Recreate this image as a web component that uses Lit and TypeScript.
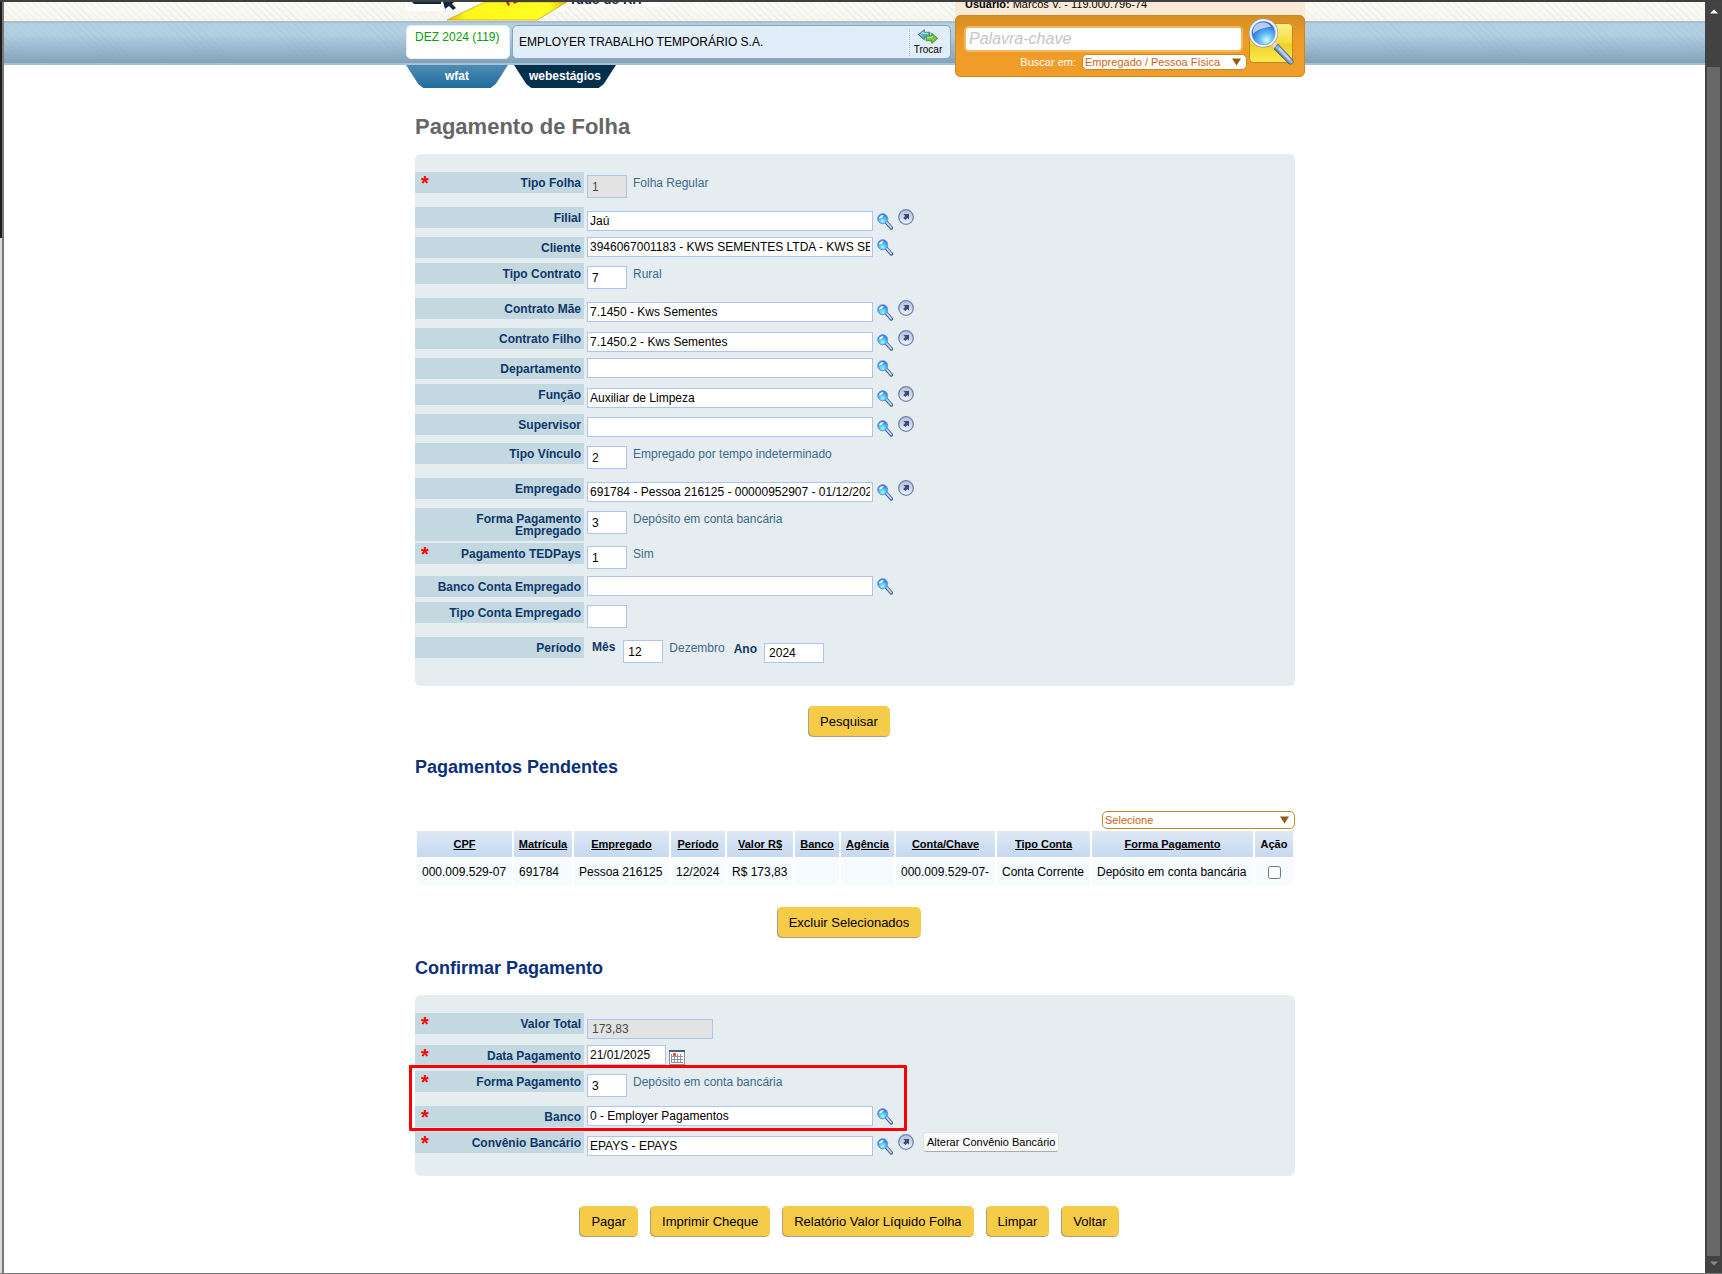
import { LitElement, html, css, svg, nothing } from "lit";
import { customElement, property } from "lit/decorators.js";
import { classMap } from "lit/directives/class-map.js";

type Kind = "code" | "lookup" | "link" | "amount" | "date" | "period";

interface Field {
  id: string;
  label: string;
  kind: Kind;
  value?: string;
  note?: string;
  required?: boolean;
  disabled?: boolean;
  tight?: boolean;
  action?: string;
}

const SEARCH_FIELDS: Field[] = [
  { id: "tipo-folha", label: "Tipo Folha", kind: "code", value: "1", note: "Folha Regular", required: true, disabled: true },
  { id: "filial", label: "Filial", kind: "link", value: "Jaú" },
  { id: "cliente", label: "Cliente", kind: "lookup", value: "3946067001183 - KWS SEMENTES LTDA - KWS SEMENTES" },
  { id: "tipo-contrato", label: "Tipo Contrato", kind: "code", value: "7", note: "Rural" },
  { id: "contrato-mae", label: "Contrato Mãe", kind: "link", value: "7.1450 - Kws Sementes" },
  { id: "contrato-filho", label: "Contrato Filho", kind: "link", value: "7.1450.2 - Kws Sementes" },
  { id: "departamento", label: "Departamento", kind: "lookup" },
  { id: "funcao", label: "Função", kind: "link", value: "Auxiliar de Limpeza" },
  { id: "supervisor", label: "Supervisor", kind: "link", tight: true },
  { id: "tipo-vinculo", label: "Tipo Vínculo", kind: "code", value: "2", note: "Empregado por tempo indeterminado" },
  { id: "empregado", label: "Empregado", kind: "link", value: "691784 - Pessoa 216125 - 00000952907 - 01/12/2024" },
  { id: "forma-empregado", label: "Forma Pagamento Empregado", kind: "code", value: "3", note: "Depósito em conta bancária" },
  { id: "tedpays", label: "Pagamento TEDPays", kind: "code", value: "1", note: "Sim", required: true, tight: true },
  { id: "banco-conta", label: "Banco Conta Empregado", kind: "lookup" },
  { id: "tipo-conta", label: "Tipo Conta Empregado", kind: "code" },
  { id: "mes", label: "Período", kind: "period" },
];

const CONFIRM_FIELDS: Field[] = [
  { id: "valor-total", label: "Valor Total", kind: "amount", value: "173,83", required: true, disabled: true },
  { id: "data", label: "Data Pagamento", kind: "date", value: "21/01/2025", required: true },
  { id: "forma", label: "Forma Pagamento", kind: "code", value: "3", note: "Depósito em conta bancária", required: true },
  { id: "banco", label: "Banco", kind: "lookup", value: "0 - Employer Pagamentos", required: true },
  { id: "convenio", label: "Convênio Bancário", kind: "link", value: "EPAYS - EPAYS", required: true, action: "Alterar Convênio Bancário" },
];

const COLUMNS: { title: string; value: string; size: string }[] = [
  { title: "CPF", value: "000.009.529-07", size: "c95" },
  { title: "Matrícula", value: "691784", size: "c58" },
  { title: "Empregado", value: "Pessoa 216125", size: "c95" },
  { title: "Período", value: "12/2024", size: "c54" },
  { title: "Valor R$", value: "R$ 173,83", size: "c66" },
  { title: "Banco", value: "", size: "c44" },
  { title: "Agência", value: "", size: "c53" },
  { title: "Conta/Chave", value: "000.009.529-07-", size: "c99" },
  { title: "Tipo Conta", value: "Conta Corrente", size: "c93" },
  { title: "Forma Pagamento", value: "Depósito em conta bancária", size: "c161" },
];

const lensIcon = html`<svg width="16" height="17" viewBox="0 0 16 17" aria-hidden="true">
  <defs>
    <radialGradient id="lens" cx="0.5" cy="0.75" r="0.75">
      <stop offset="0" stop-color="#9ffaff" /><stop offset="0.45" stop-color="#4fc0f4" /><stop offset="1" stop-color="#2b62d0" />
    </radialGradient>
  </defs>
  <path d="M9.500 9.500 14.400 15" stroke="#3d5f8f" stroke-width="3.400" stroke-linecap="round" />
  <path d="M9.600 9.400 14.200 14.600" stroke="#b9d8ee" stroke-width="1.800" stroke-linecap="round" />
  <circle cx="5.700" cy="5.700" r="5" fill="url(#lens)" stroke="#6f93cf" />
  <path d="M2 5.800C2 3 4 1.800 6.600 2 6 4 4.600 5.400 2 5.800Z" fill="#fff" opacity="0.85" />
</svg>`;

const openIcon = html`<svg width="16" height="16" viewBox="0 0 16 16" aria-hidden="true">
  <defs>
    <linearGradient id="disc" x1="0" y1="0" x2="0" y2="1">
      <stop offset="0" stop-color="#b3c0de" /><stop offset="0.5" stop-color="#c9d4ea" /><stop offset="1" stop-color="#f4f8ff" />
    </linearGradient>
  </defs>
  <circle cx="8" cy="8" r="7.300" fill="url(#disc)" stroke="#7183ac" stroke-width="1.300" />
  <path d="M5.500 5H11V10.500L9.400 9 7.400 11 5.200 9 7.200 7Z" fill="#3d4b72" />
</svg>`;

const calendarIcon = html`<svg width="16" height="15" viewBox="0 0 16 15" aria-hidden="true">
  <rect x="0.500" y="0.500" width="15" height="14" fill="#fff" stroke="#8f9199" />
  <rect x="0" y="0" width="16" height="2" fill="#4c5a82" />
  <rect x="2" y="4" width="12" height="9" fill="#8c93a8" />
  ${[0, 1, 2, 3].map((c) => [0, 1, 2].map((r) => svg`<rect x=${3 + c * 3} y=${4 + r * 3} width="2" height="2" fill="#fff" />`))}
  <rect x="4" y="3" width="3" height="3" fill="#f0562b" />
</svg>`;

const caret = html`<svg class="caret" width="9" height="8" viewBox="0 0 9 8" aria-hidden="true"><path d="M0 0.500H9L4.500 7.500Z" fill="#935a12" /></svg>`;

@customElement("field-list")
export class FieldList extends LitElement {
  @property({ attribute: false }) fields: Field[] = [];

  static styles = css`
    :host { display: block; font: 12px "Liberation Sans", Arial, sans-serif; color: #000; }
    * { box-sizing: border-box; }
    .row { display: grid; grid-template-columns: 169px 1fr; column-gap: 3px; align-items: start; min-height: 35px; }
    .row.lookup, .row.date { min-height: 26px; }
    .row.link { min-height: 30px; }
    .row.link.tight { min-height: 29px; }
    .row.code.tight { min-height: 33px; }
    .row.amount { min-height: 32px; }
    .label { display: flex; align-items: flex-start; padding: 0 3px 0 6px; background: #c4d8e1; color: #0e3768; font-weight: bold; text-align: right; line-height: 12px; }
    .star { height: 21px; width: 14px; text-align: left; color: #f00; font-size: 20px; line-height: 22px; }
    .name { flex: 1; padding: 5px 0 4px; }
    .field { display: flex; align-items: flex-start; }
    input { display: block; height: 20px; margin: 0; padding: 0 2px; border: 1px solid #aec4ec; background: #fff; color: #000; font: inherit; outline: none; }
    input:disabled { background: #e3e3e3; color: #4a4a4a; }
    .wide { width: 286px; }
    .small { width: 40px; height: 23px; margin-top: 3px; padding: 0 4px; }
    .amount .wide { width: 126px; margin-top: 6px; padding: 0 4px; }
    .date .wide { width: 79px; }
    .link .wide { margin-top: 4px; }
    .tight .wide { margin-top: 3px; }
    .note { padding: 5px 7px 4px 6px; line-height: 12px; color: #3c6a8a; }
    .icon { display: block; padding: 0; border: 0; background: none; cursor: pointer; }
    .icon svg { display: block; }
    .find { margin: 2px 5px 0 4px; }
    .link .find { margin-top: 6px; }
    .open { margin-top: 2px; }
    .cal { margin: 5px 3px 0; }
    .alter { height: 20px; margin-left: 9px; padding: 0 3px; border: 1px solid #e2e2e2; border-radius: 4px; border-bottom-color: #aaa; background: #fafafa; color: #000; font: 11px "Liberation Sans", Arial, sans-serif; }
    .sub { padding: 4px 7px 0 5px; font-weight: bold; line-height: 12px; color: #0e3768; }
    .sub + .small { margin-left: 1px; }
    .year { padding: 6px 7px 0 2px; }
    .ano { width: 60px; margin-top: 6px; padding: 0 4px; }
  `;

  private control(f: Field) {
    const value = f.value ?? "";
    switch (f.kind) {
      case "code":
        return html`<input class="small" id=${f.id} .value=${value} ?disabled=${!!f.disabled} />
          ${f.note ? html`<span class="note">${f.note}</span>` : nothing}`;
      case "amount":
        return html`<input class="wide" id=${f.id} .value=${value} ?disabled=${!!f.disabled} />`;
      case "date":
        return html`<input class="wide" id=${f.id} .value=${value} />
          <button class="icon cal" type="button" aria-label="Calendário">${calendarIcon}</button>`;
      case "period":
        return html`<label class="sub" for="mes">Mês</label><input class="small" id="mes" value="12" />
          <span class="note">Dezembro</span>
          <label class="sub year" for="ano">Ano</label><input class="ano" id="ano" value="2024" />`;
      default:
        return html`<input class="wide" id=${f.id} .value=${value} />
          <button class="icon find" type="button" aria-label="Pesquisar ${f.label}">${lensIcon}</button>
          ${f.kind === "link" ? html`<button class="icon open" type="button" aria-label="Abrir ${f.label}">${openIcon}</button>` : nothing}
          ${f.action ? html`<button class="alter" type="button">${f.action}</button>` : nothing}`;
    }
  }

  render() {
    return this.fields.map(
      (f) => html`<div class=${classMap({ row: true, [f.kind]: true, tight: !!f.tight })}>
        <label class="label" for=${f.id}><span class="star">${f.required ? "*" : nothing}</span><span class="name">${f.label}</span></label>
        <div class="field">${this.control(f)}</div>
      </div>`
    );
  }
}

@customElement("app-root")
export class AppRoot extends LitElement {
  static styles = css`
    :host { display: block; font: 12px "Liberation Sans", Arial, sans-serif; color: #000; }
    * { box-sizing: border-box; }
    .window { display: grid; grid-template-columns: 4px 1fr 17px; min-height: 100vh; border-top: 2px solid #404040; border-bottom: 2px solid #777; background: #fff; }
    .edge { display: grid; grid-template-columns: 2px 2px; background: linear-gradient(#1e1c1c 236px, #dcdcdc 236px); }
    .edge i { grid-column: 2; background: #787676; }
    .scroll { display: flex; flex-direction: column; align-items: center; background: #424242; }
    .thumb { flex: 1; width: 13px; background: #686868; }
    .up { height: 65px; padding-top: 7px; }
    .down { height: 17px; padding-top: 5px; }
    .up svg, .down svg { display: block; }

    .header {
      padding-left: 1px;
      background:
        linear-gradient(#a9bfcd, #a9bfcd) 0 19px / 100% 2px no-repeat,
        linear-gradient(#a5c1d3, #a5c1d3) 0 61px / 100% 2px no-repeat,
        repeating-linear-gradient(45deg, transparent 0 4px, rgba(130, 160, 170, 0.1) 4px 5px) 0 0 / 100% 63px no-repeat,
        linear-gradient(#fbfbf5, #f6f6ee) 0 0 / 100% 19px no-repeat,
        linear-gradient(#b3d0e3 30%, #7d9fb7) 0 19px / 100% 44px no-repeat;
    }
    .bar { display: grid; grid-template-columns: 1fr 350px; column-gap: 4px; max-width: 900px; margin: 0 auto; }
    .brand { display: block; height: 19px; }
    .cards { display: grid; grid-template-columns: 104px 1fr; column-gap: 2px; height: 44px; padding: 4px 0 6px 1px; }
    .card { display: flex; border: 1px solid #86a6be; border-radius: 5px; background: #e1edf9; }
    .month { padding: 4px 8px; border-color: #e4edf4; background: #fff; color: #0a9b0a; line-height: 14px; }
    .company { align-items: center; padding: 0 4px 0 6px; }
    .company span { flex: 1; }
    .swap { display: flex; flex-direction: column; align-items: center; width: 37px; height: 27px; padding: 0; border: 0; border-left: 1px dotted #a9bccb; background: none; color: #000; font: 10px/12px "Liberation Sans", Arial, sans-serif; }
    .tabs { display: flex; gap: 6px; padding-left: 1px; }
    .tab { display: flex; justify-content: center; width: 102px; height: 23px; padding-top: 4px; background: linear-gradient(#4f8bb2, #1f6c9d); color: #fff; font-weight: bold; font-size: 12px; line-height: 14px; text-decoration: none; clip-path: polygon(0 0, 100% 0, 88% 83%, 83% 100%, 17% 100%, 12% 83%); }
    .tab.dark { background: #04304e; }
    .user { display: flex; align-items: flex-end; height: 13px; padding: 0 10px 4px; overflow: hidden; background: #f8ead6; font-size: 11px; line-height: 13px; white-space: pre; }
    .search { display: grid; grid-template-columns: 1fr 46px; column-gap: 5px; height: 62px; padding: 10px 10px 0 8px; border: 1px solid #c98a25; border-radius: 5px; background: linear-gradient(#d48e20, #ef9d28 45%); }
    .fields { display: grid; grid-template-rows: 26px 16px; row-gap: 2px; }
    .word { width: 100%; height: 26px; padding: 0 3px; border: 2px solid #f4b860; border-radius: 5px; background: #fff; font: italic 16px "Liberation Sans", Arial, sans-serif; outline: none; }
    .word::placeholder { color: #c6c6c6; opacity: 1; }
    .scope { display: flex; justify-content: flex-end; align-items: center; gap: 6px; margin-right: -4px; color: #fff; font-size: 11px; }
    .pick { display: grid; align-items: center; }
    .pick > * { grid-area: 1 / 1; }
    .pick select { appearance: none; width: 165px; height: 16px; margin: 0; padding: 0 2px; border: 1px solid #c98a25; border-radius: 5px; background: #fff; color: #cc6412; font: 11px/12px "Liberation Sans", Arial, sans-serif; outline: none; }
    .pick.big select { width: 193px; height: 18px; padding: 0 2px; }
    .caret { justify-self: end; margin-right: 6px; pointer-events: none; }
    .go { width: 46px; height: 50px; margin-top: -9px; padding: 0; border: 0; background: none; }
    .go svg { display: block; }

    .page { max-width: 881px; margin: 0 auto; padding: 26px 0 36px 1px; }
    h1 { margin: 0 0 14px; color: #666; font-size: 22px; line-height: 26px; }
    h2 { margin: 19px 0 16px; color: #0b2f7b; font-size: 18px; line-height: 22px; }
    .panel { position: relative; padding: 18px 0 14px; border-radius: 6px; background: #e5edf0; }
    .mark { position: absolute; left: -6px; top: 70px; width: 498px; height: 66px; border: 3px solid #f00; border-radius: 1px; pointer-events: none; }
    .actions { display: flex; justify-content: center; gap: 12px; padding: 20px 12px 0 0; }
    .actions.last { padding-top: 30px; }
    .btn { height: 31px; padding: 0 12px 1px; border: 0; border-radius: 5px; background: #f5cb47; box-shadow: inset 1px -1px 0 #aaa08a; color: #000; font: 13px "Liberation Sans", Arial, sans-serif; }
    .filter { display: flex; justify-content: flex-end; padding-top: 17px; }
    table { width: 100%; border-collapse: separate; border-spacing: 2px; table-layout: fixed; }
    th { height: 26px; padding: 0; background: linear-gradient(#dfe9f5, #c5d9f2); font-size: 11px; }
    th a { color: #000; }
    td { height: 26px; padding: 0 0 0 5px; background: #f5fbff; white-space: nowrap; }
    td.check { padding: 0; text-align: center; }
    td input { display: block; width: 13px; height: 13px; margin: 1px auto 0; }
    .c95 { width: 95px; } .c58 { width: 58px; } .c54 { width: 54px; } .c66 { width: 66px; } .c44 { width: 44px; }
    .c53 { width: 53px; } .c99 { width: 99px; } .c93 { width: 93px; } .c161 { width: 161px; }
  `;

  private buttons(names: string[]) {
    return names.map((n) => html`<button class="btn" type="button">${n}</button>`);
  }

  render() {
    return html`<div class="window">
      <div class="edge"><i></i></div>
      <main>
        <header class="header">
          <div class="bar">
            <div>
              <svg class="brand" width="260" height="19" viewBox="0 0 260 19" aria-hidden="true">
                <defs>
                  <linearGradient id="ray" x1="0" y1="0" x2="1" y2="0"><stop offset="0" stop-color="#e2b20d" /><stop offset="0.15" stop-color="#fdf51c" /><stop offset="0.85" stop-color="#ffff1f" /><stop offset="1" stop-color="#d8b410" /></linearGradient>
                </defs>
                <path d="M0 0H258V5H160V9H0Z" fill="#fff" />
                <path d="M42 18 80 0H162L132 18Z" fill="url(#ray)" stroke="#cfa51a" stroke-width="0.8" />
                <path d="M7 0H36V2H9Z" fill="#0d2745" />
                <path d="M38 0 49 0 47 2 51 6 48 8 44 4 40 7Z" fill="#0d2745" />
                <path d="M101 0 103 4 105 3 104 0ZM108 0 109 2 113 0Z" fill="#c42a12" />
                <text x="164" y="2" font-family="Liberation Sans, Arial, sans-serif" font-size="13" font-weight="bold" fill="#0d2745">Tudo do RH</text>
              </svg>
              <div class="cards">
                <div class="card month">DEZ 2024 (119)</div>
                <div class="card company">
                  <span>EMPLOYER TRABALHO TEMPORÁRIO S.A.</span>
                  <button class="swap" type="button">
                    <svg width="22" height="16" viewBox="0 0 22 16" aria-hidden="true">
                      <path d="M0.700 6 7 0.700V3.500H13V8.500H7V11.500Z" fill="#5bb5bd" stroke="#23727f" stroke-width="0.900" />
                      <path d="M21.300 10 15 4.600V7.500H9V12.500H15V15.400Z" fill="#77c83f" stroke="#37801f" stroke-width="0.900" />
                      <path d="M3 6 6 3.300V4.600H11" fill="none" stroke="#c0ecee" /><path d="M10 8.700H16V7.400" fill="none" stroke="#d2f4b0" />
                    </svg>Trocar</button>
                </div>
              </div>
              <nav class="tabs"><a class="tab" href="#wfat">wfat</a><a class="tab dark" href="#webestagios">webestágios</a></nav>
            </div>
            <div>
              <div class="user"><b>Usuário:</b> Marcos V. - 119.000.796-74</div>
              <form class="search">
                <div class="fields">
                  <input class="word" type="text" aria-label="Palavra-chave" placeholder="Palavra-chave" />
                  <div class="scope">
                    <label for="scope">Buscar em:</label>
                    <span class="pick"><select id="scope"><option>Empregado / Pessoa Física</option></select>${caret}</span>
                  </div>
                </div>
                <button class="go" type="button" aria-label="Buscar">
                  <svg width="46" height="50" viewBox="0 0 46 50">
                    <defs>
                      <linearGradient id="tile" x1="0" y1="0" x2="0" y2="1"><stop offset="0" stop-color="#fff08a" /><stop offset="0.5" stop-color="#f4dc3c" /><stop offset="0.52" stop-color="#ead022" /><stop offset="1" stop-color="#ffec50" /></linearGradient>
                      <radialGradient id="glass" cx="0.62" cy="0.78" r="0.8"><stop offset="0" stop-color="#d8fbff" /><stop offset="0.3" stop-color="#67c6f6" /><stop offset="0.7" stop-color="#2c78dc" /><stop offset="1" stop-color="#1d53b6" /></radialGradient>
                      <linearGradient id="grip" x1="0" y1="1" x2="1" y2="0"><stop offset="0.35" stop-color="#2c4a78" /><stop offset="0.5" stop-color="#a8c4e6" /><stop offset="0.65" stop-color="#48699c" /></linearGradient>
                    </defs>
                    <rect x="1.500" y="6.500" width="43" height="39" rx="4" fill="url(#tile)" stroke="#c48a1a" />
                    <path d="M25 26 31 32" stroke="#d5dcea" stroke-width="4" />
                    <path d="M30 27 45 43Q46 48 41 47L26 32Z" fill="url(#grip)" stroke="#3f5c8b" stroke-width="0.700" />
                    <path d="M31 31 42 43" stroke="#bad2ee" stroke-width="2" />
                    <circle cx="15.500" cy="16" r="13" fill="url(#glass)" stroke="#8f9cb8" stroke-width="3.400" />
                    <circle cx="15.500" cy="16" r="13" fill="none" stroke="#eef2f8" stroke-width="2" />
                    <path d="M5 17C4 9 10 4.500 17 5.500 20 6 22 8 23 10 17 10 10 12 5 17Z" fill="#fff" opacity="0.650" />
                  </svg>
                </button>
              </form>
            </div>
          </div>
        </header>
        <div class="page">
          <h1>Pagamento de Folha</h1>
          <section class="panel"><field-list .fields=${SEARCH_FIELDS}></field-list></section>
          <div class="actions">${this.buttons(["Pesquisar"])}</div>
          <h2>Pagamentos Pendentes</h2>
          <div class="filter"><span class="pick big"><select aria-label="Selecione"><option>Selecione</option></select>${caret}</span></div>
          <table>
            <thead><tr>
              ${COLUMNS.map((c) => html`<th class=${c.size}><a href="#ordenar">${c.title}</a></th>`)}
              <th>Ação</th>
            </tr></thead>
            <tbody><tr>
              ${COLUMNS.map((c) => html`<td>${c.value}</td>`)}
              <td class="check"><input type="checkbox" aria-label="Selecionar Pessoa 216125" /></td>
            </tr></tbody>
          </table>
          <div class="actions">${this.buttons(["Excluir Selecionados"])}</div>
          <h2>Confirmar Pagamento</h2>
          <section class="panel"><field-list .fields=${CONFIRM_FIELDS}></field-list><div class="mark"></div></section>
          <div class="actions last">${this.buttons(["Pagar", "Imprimir Cheque", "Relatório Valor Líquido Folha", "Limpar", "Voltar"])}</div>
        </div>
      </main>
      <div class="scroll" aria-hidden="true">
        <div class="up"><svg width="8" height="5" viewBox="0 0 8 5"><path d="M0 4.500 4 0.500 8 4.500Z" fill="#fff" /></svg></div>
        <div class="thumb"></div>
        <div class="down"><svg width="8" height="5" viewBox="0 0 8 5"><path d="M0 0.500 4 4.500 8 0.500Z" fill="#8c8c8c" /></svg></div>
      </div>
    </div>`;
  }
}
